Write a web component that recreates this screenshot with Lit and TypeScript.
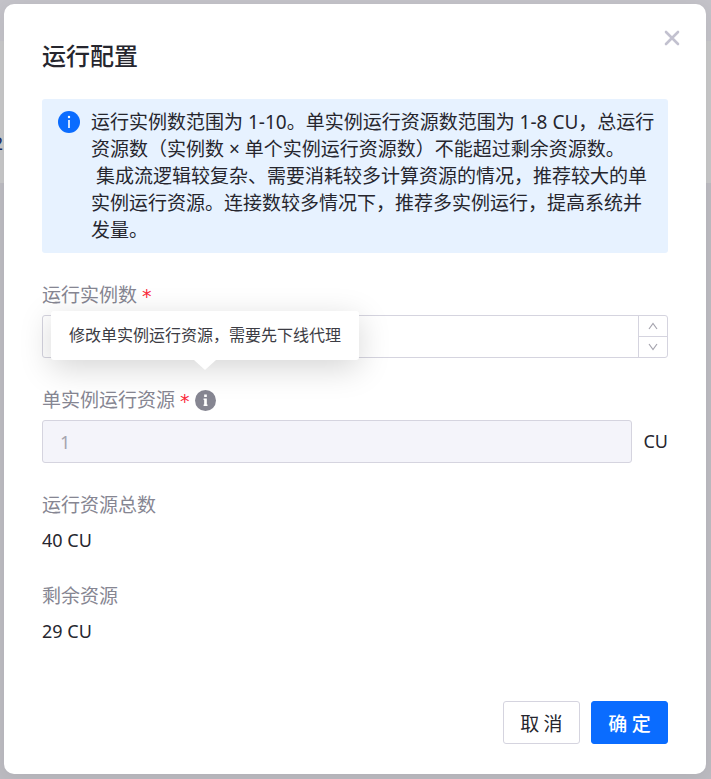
import { LitElement, html, css, svg } from "lit";
import { customElement, property, state } from "lit/decorators.js";

const infoGlyph = svg`<circle cx="11" cy="11" r="11" fill="currentColor"/><circle cx="11" cy="6" r="1.2" fill="#fff"/><path d="M11 9v8" stroke="#fff" stroke-width="1.6"/>`;

@customElement("info-tip")
class InfoTip extends LitElement {
  @property() text = "";

  static styles = css`
    :host {
      display: inline-flex;
      position: relative;
      color: #868692;
    }
    .icon {
      display: block;
      width: 21px;
      height: 21px;
    }
    .tip {
      position: absolute;
      z-index: 2;
      bottom: calc(100% + 30px);
      left: 50%;
      transform: translateX(-50%);
      padding: 12px 18px 13px;
      border-radius: 3px;
      background: #fff;
      box-shadow: 0 8px 32px rgba(0, 0, 0, 0.17);
      color: #3c3c44;
      font-size: 16px;
      line-height: 24px;
      white-space: nowrap;
    }
    .tip::after {
      content: "";
      position: absolute;
      top: 100%;
      left: 50%;
      margin-left: -11px;
      border: 11px solid transparent;
      border-top: 10px solid #fff;
      border-bottom: 0;
    }
  `;

  render() {
    return html`
      <svg class="icon" viewBox="0 0 22 22" aria-hidden="true">
        <circle cx="11" cy="11" r="11" fill="currentColor" />
        <path d="M9.6 4.8h2.8v2.5H9.6zM9 8.8h3.4v6.4h.7v1.6H9v-1.6h.6v-4.8H9z" fill="#fff" />
      </svg>
      <div class="tip" role="tooltip">${this.text}</div>
    `;
  }
}

@customElement("app-root")
class AppRoot extends LitElement {
  @state() private count = "";

  static styles = css`
    :host {
      display: flex;
      position: relative;
      box-sizing: border-box;
      min-height: 100vh;
      padding: 4px 5px 5px 4px;
      background: linear-gradient(#c3c2c8 0 41px, #c7c7c8 41px 183px, #bcbbc1 183px);
      color: #26262e;
      font: 19px/27px "Noto Sans", "Noto Sans CJK SC", sans-serif;
    }
    * {
      box-sizing: border-box;
    }
    .behind {
      position: absolute;
      top: 130px;
      left: 0;
      display: flex;
      justify-content: flex-end;
      width: 3px;
      overflow: hidden;
      color: #1c2f66;
      font-size: 18px;
    }
    .dialog {
      position: relative;
      flex: 1;
      min-width: 0;
      display: flex;
      flex-direction: column;
      padding: 38px;
      padding-bottom: 30px;
      border-radius: 10px;
      background: #fff;
      box-shadow: 0 4px 16px rgba(0, 0, 0, 0.06);
    }
    .title {
      margin: 0 0 31px;
      font-size: 24px;
      line-height: 26px;
      font-weight: 500;
    }
    .title,
    .button {
      font-family: "Noto Sans CJK SC", sans-serif;
    }
    .close {
      position: absolute;
      top: 22px;
      right: 22px;
      display: flex;
      padding: 4px;
      border: 0;
      background: none;
      color: #c2c1cf;
    }
    .alert {
      display: flex;
      gap: 11px;
      margin-bottom: 29px;
      padding: 10px 8px 9px 16px;
      border-radius: 3px;
      background: #e7f2ff;
    }
    .alert-icon {
      flex: none;
      width: 22px;
      height: 22px;
      margin-top: 2px;
      color: #0a6cff;
    }
    .alert-text {
      margin: 0;
    }
    .field {
      display: flex;
      flex-direction: column;
      gap: 6px;
      margin-bottom: 29px;
    }
    .facts .field {
      gap: 8px;
    }
    .label-row {
      display: flex;
      align-items: center;
      gap: 5px;
      height: 27px;
      color: #868692;
    }
    .required {
      padding-top: 2px;
      color: #fa2a3a;
      font-family: "DejaVu Sans", sans-serif;
    }
    .stepper {
      display: flex;
      height: 43px;
      border: 1px solid #d5d4df;
      border-radius: 3px;
      overflow: hidden;
    }
    .input {
      flex: 1;
      min-width: 0;
      padding: 0 17px;
      border: 0;
      outline: 0;
      background: none;
      color: inherit;
      font: inherit;
    }
    .input:disabled {
      height: 43px;
      border: 1px solid #d5d4df;
      border-radius: 3px;
      background: #f4f4fa;
      color: #a5a4ae;
      font-size: 18px;
    }
    .steps {
      display: flex;
      flex-direction: column;
      width: 29px;
      border-left: 1px solid #d5d4df;
    }
    .step {
      flex: 1;
      display: flex;
      align-items: center;
      justify-content: center;
      padding: 0;
      border: 0;
      background: none;
      color: #a5a4ae;
    }
    .step + .step {
      border-top: 1px solid #d5d4df;
    }
    .with-unit {
      display: flex;
      align-items: center;
      gap: 11px;
    }
    .unit,
    .value {
      margin: 0;
      font-size: 18px;
    }
    .facts {
      margin: 0;
    }
    .footer {
      display: flex;
      justify-content: flex-end;
      gap: 11px;
      margin-top: auto;
    }
    .button {
      width: 77px;
      height: 43px;
      padding: 0;
      border: 1px solid #d5d4df;
      border-radius: 3px;
      background: #fff;
      color: #26262e;
      font-size: 19px;
    }
    .primary {
      border-color: #0a6cff;
      background: #0a6cff;
      color: #fff;
      font-weight: 500;
    }
  `;

  private step(delta: number) {
    const next = (Number(this.count) || 0) + delta;
    this.count = String(Math.min(10, Math.max(1, next)));
  }

  render() {
    return html`
      <span class="behind" aria-hidden="true">2</span>
      <section class="dialog" role="dialog" aria-labelledby="title">
        <h1 class="title" id="title">运行配置</h1>
        <button class="close" aria-label="关闭">
          <svg width="16" height="16" viewBox="0 0 16 16" fill="none" stroke="currentColor" stroke-width="2.6" stroke-linecap="round">
            <path d="M2 2l12 12M14 2L2 14" />
          </svg>
        </button>
        <div class="alert">
          <svg class="alert-icon" viewBox="0 0 22 22" aria-hidden="true">${infoGlyph}</svg>
          <p class="alert-text">运行实例数范围为 1-10。单实例运行资源数范围为 1-8 CU，总运行资源数（实例数 × 单个实例运行资源数）不能超过剩余资源数。<br />&nbsp;集成流逻辑较复杂、需要消耗较多计算资源的情况，推荐较大的单实例运行资源。连接数较多情况下，推荐多实例运行，提高系统并发量。</p>
        </div>
        <div class="field">
          <div class="label-row">
            <label for="count">运行实例数</label><span class="required">*</span>
          </div>
          <div class="stepper">
            <input class="input" id="count" inputmode="numeric" .value=${this.count}
              @input=${(e: Event) => (this.count = (e.target as HTMLInputElement).value)} />
            <div class="steps">
              <button class="step" aria-label="增加" @click=${() => this.step(1)}>
                <svg width="10" height="8" viewBox="0 0 10 8" fill="none" stroke="currentColor" stroke-width="1.2"><path d="M1 7l4-5.5L9 7" /></svg>
              </button>
              <button class="step" aria-label="减少" @click=${() => this.step(-1)}>
                <svg width="10" height="8" viewBox="0 0 10 8" fill="none" stroke="currentColor" stroke-width="1.2"><path d="M1 1l4 5.5L9 1" /></svg>
              </button>
            </div>
          </div>
        </div>
        <div class="field">
          <div class="label-row">
            <label for="unit">单实例运行资源</label><span class="required">*</span>
            <info-tip text="修改单实例运行资源，需要先下线代理"></info-tip>
          </div>
          <div class="with-unit">
            <input class="input" id="unit" value="1" disabled />
            <span class="unit">CU</span>
          </div>
        </div>
        <dl class="facts">
          <div class="field">
            <dt class="label-row">运行资源总数</dt>
            <dd class="value">40 CU</dd>
          </div>
          <div class="field">
            <dt class="label-row">剩余资源</dt>
            <dd class="value">29 CU</dd>
          </div>
        </dl>
        <footer class="footer">
          <button class="button">取 消</button>
          <button class="button primary">确 定</button>
        </footer>
      </section>
    `;
  }
}
